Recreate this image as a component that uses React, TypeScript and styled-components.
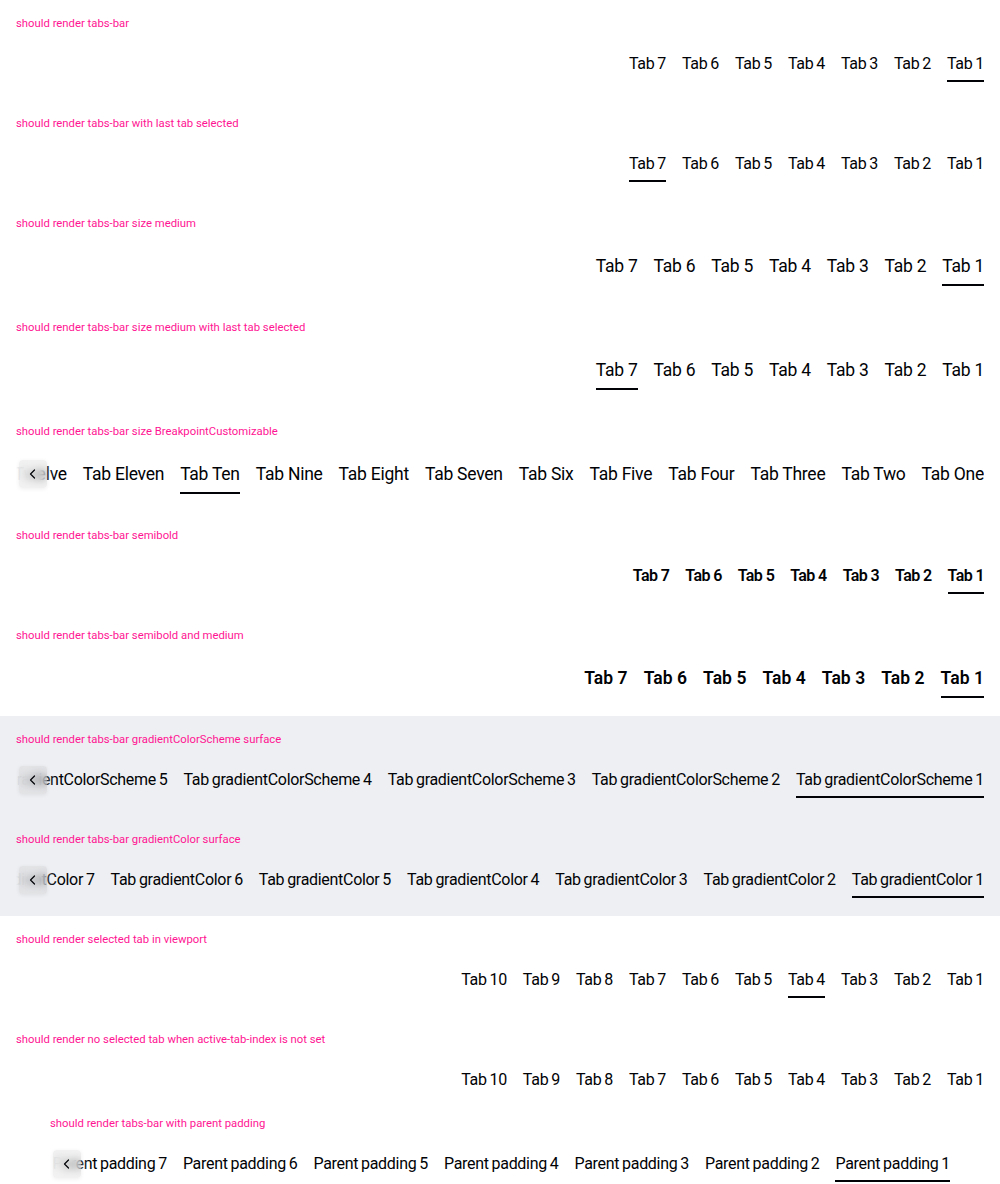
import React from "react";
import styled, { createGlobalStyle, css } from "styled-components";

const GlobalStyle = createGlobalStyle`
  html, body { margin: 0; padding: 0; background: #fff; }
  body {
    font-family: Roboto, "Noto Sans", sans-serif;
    color: #010205;
    -webkit-font-smoothing: antialiased;
  }
`;

type Size = "small" | "medium";

const Section = styled.section<{ $surface?: boolean; $parent?: boolean }>`
  padding: ${(p) => (p.$parent ? "0 50px 4px" : "16px 16px 18px")};
  background: ${(p) => (p.$surface ? "#eeeff2" : "transparent")};
`;

const Label = styled.p`
  margin: 0 0 20px;
  font-size: 11.3px;
  line-height: 16px;
  color: #ff1493;
`;

const Bar = styled.div`
  position: relative;
`;

const Scroller = styled.div`
  display: flex;
  direction: rtl;
  gap: 16px;
  overflow: hidden;
  white-space: nowrap;
`;

const Tab = styled.button<{ $size: Size; $active?: boolean; $bold?: boolean }>`
  position: relative;
  flex: 0 0 auto;
  direction: ltr;
  margin: 0;
  border: 0;
  background: none;
  padding: 0 0 6px;
  font-family: inherit;
  color: #010205;
  font-weight: ${(p) => (p.$bold ? 600 : 400)};
  font-size: ${(p) => (p.$size === "medium" ? "17.5px" : "16px")};
  line-height: ${(p) => (p.$size === "medium" ? "28px" : "24px")};
  letter-spacing: ${(p) =>
    p.$bold ? (p.$size === "medium" ? "0.05px" : "-0.6px") : p.$size === "medium" ? "-0.25px" : "-0.3px"};
  word-spacing: ${(p) => (!p.$bold && p.$size === "small" ? "-0.8px" : "0px")};
  ${(p) =>
    p.$active &&
    css`
      &::after {
        content: "";
        position: absolute;
        left: 0;
        right: 0;
        bottom: 0;
        height: 2px;
        background: #010205;
      }
    `}
`;

const Fade = styled.div<{ $surface?: boolean; $size: Size }>`
  position: absolute;
  left: 0;
  top: 0;
  height: ${(p) => (p.$size === "medium" ? "28px" : "24px")};
  width: 40px;
  pointer-events: none;
  background: linear-gradient(
    to right,
    ${(p) => (p.$surface ? "rgba(238,239,242,1)" : "rgba(255,255,255,1)")} 0%,
    ${(p) => (p.$surface ? "rgba(238,239,242,0.7)" : "rgba(255,255,255,0.7)")} 30%,
    ${(p) => (p.$surface ? "rgba(238,239,242,0)" : "rgba(255,255,255,0)")} 100%
  );
`;

const PrevButton = styled.span<{ $size: Size }>`
  position: absolute;
  left: 3px;
  top: ${(p) => (p.$size === "medium" ? "0px" : "-2px")};
  width: 28px;
  height: 28px;
  border-radius: 4px;
  display: flex;
  align-items: center;
  justify-content: center;
  background: rgba(148, 149, 152, 0.12);
  backdrop-filter: blur(4px);
  box-shadow: 0 1px 4px rgba(0, 0, 0, 0.07);
  color: #010205;
`;

const Chevron = () => (
  <svg width="16" height="16" viewBox="0 0 16 16" fill="none">
    <path d="M9.5 4 L5.5 8 L9.5 12" stroke="currentColor" strokeWidth="1.2" strokeLinecap="round" strokeLinejoin="round" />
  </svg>
);

type Spec = {
  label: string;
  tabs: string[];
  active?: number;
  size: Size;
  bold?: boolean;
  surface?: boolean;
  parent?: boolean;
  scroll?: boolean;
};

const range = (n: number, f: (i: number) => string) => Array.from({ length: n }, (_, i) => f(i + 1));
const seven = range(7, (i) => `Tab ${i}`);
const ten = range(10, (i) => `Tab ${i}`);
const words = ["One", "Two", "Three", "Four", "Five", "Six", "Seven", "Eight", "Nine", "Ten", "Eleven", "Twelve"];

const specs: Spec[] = [
  { label: "should render tabs-bar", tabs: seven, active: 0, size: "small" },
  { label: "should render tabs-bar with last tab selected", tabs: seven, active: 6, size: "small" },
  { label: "should render tabs-bar size medium", tabs: seven, active: 0, size: "medium" },
  { label: "should render tabs-bar size medium with last tab selected", tabs: seven, active: 6, size: "medium" },
  {
    label: "should render tabs-bar size BreakpointCustomizable",
    tabs: words.map((w) => `Tab ${w}`),
    active: 9,
    size: "medium",
    scroll: true,
  },
  { label: "should render tabs-bar semibold", tabs: seven, active: 0, size: "small", bold: true },
  { label: "should render tabs-bar semibold and medium", tabs: seven, active: 0, size: "medium", bold: true },
  {
    label: "should render tabs-bar gradientColorScheme surface",
    tabs: range(7, (i) => `Tab gradientColorScheme ${i}`),
    active: 0,
    size: "small",
    surface: true,
    scroll: true,
  },
  {
    label: "should render tabs-bar gradientColor surface",
    tabs: range(8, (i) => `Tab gradientColor ${i}`),
    active: 0,
    size: "small",
    surface: true,
    scroll: true,
  },
  { label: "should render selected tab in viewport", tabs: ten, active: 3, size: "small" },
  { label: "should render no selected tab when active-tab-index is not set", tabs: ten, size: "small" },
  {
    label: "should render tabs-bar with parent padding",
    tabs: range(8, (i) => `Parent padding ${i}`),
    active: 0,
    size: "small",
    parent: true,
    scroll: true,
  },
];

const TabsBar = ({ spec }: { spec: Spec }) => (
  <Bar>
    <Scroller>
      {spec.tabs.map((t, i) => (
        <Tab key={t} $size={spec.size} $bold={spec.bold} $active={spec.active === i}>
          {t}
        </Tab>
      ))}
    </Scroller>
    {spec.scroll && (
      <>
        <Fade $surface={spec.surface} $size={spec.size} />
        <PrevButton $size={spec.size}>
          <Chevron />
        </PrevButton>
      </>
    )}
  </Bar>
);

export default function App() {
  return (
    <>
      <GlobalStyle />
      {specs.map((s) => (
        <Section key={s.label} $surface={s.surface} $parent={s.parent}>
          <Label>{s.label}</Label>
          <TabsBar spec={s} />
        </Section>
      ))}
    </>
  );
}
